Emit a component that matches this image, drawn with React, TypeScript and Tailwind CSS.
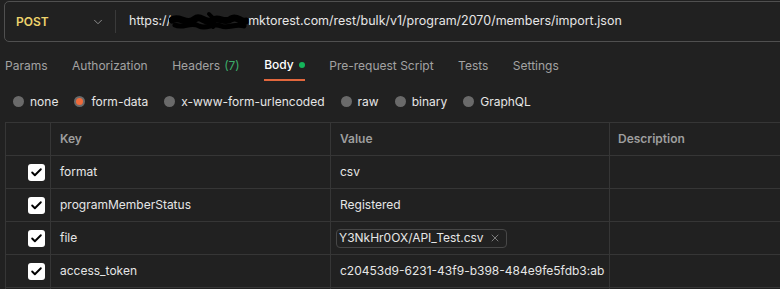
import { ChevronDown, X, Check } from "lucide-react";

type Row = {
  key: string;
  value: string;
  file?: boolean;
};

const rows: Row[] = [
  { key: "format", value: "csv" },
  { key: "programMemberStatus", value: "Registered" },
  { key: "file", value: "Y3NkHr0OX/API_Test.csv", file: true },
  { key: "access_token", value: "c20453d9-6231-43f9-b398-484e9fe5fdb3:ab" },
  { key: "", value: "" },
];

const tabs = ["Params", "Authorization", "Headers", "Body", "Pre-request Script", "Tests", "Settings"];

const bodyTypes = ["none", "form-data", "x-www-form-urlencoded", "raw", "binary", "GraphQL"];

const Scribble = () => (
  <svg width="80" height="22" viewBox="0 0 80 22" className="shrink-0 -ml-[2px] -mr-[1px]">
    <path
      d="M3 9 C10 4 18 15 26 8 C32 3 36 14 44 9 C50 5 55 13 62 8 C68 4 72 12 77 10"
      stroke="#000"
      strokeWidth="7"
      fill="none"
      strokeLinecap="round"
    />
    <path
      d="M6 14 C14 18 22 10 30 15 C38 19 44 11 52 15 C60 18 66 12 75 15"
      stroke="#000"
      strokeWidth="5"
      fill="none"
      strokeLinecap="round"
    />
    <path d="M40 3 C44 6 46 10 44 16" stroke="#000" strokeWidth="4" fill="none" strokeLinecap="round" />
  </svg>
);

const App = () => {
  return (
    <div className="w-[780px] h-[289px] overflow-hidden bg-[#212121] font-['Inter',sans-serif] text-[12px] text-[#e6e6e6]">
      {/* url bar */}
      <div className="pl-1 pt-px">
        <div className="h-[41px] w-[820px] border border-[#505050] rounded-[5px] flex items-center">
          <div className="w-[110px] pl-[11px] pr-[10px] flex items-center justify-between">
            <span className="font-semibold text-[#eed36c]">POST</span>
            <ChevronDown size={14} strokeWidth={1.5} className="text-[#9a9a9a]" />
          </div>
          <div className="w-px h-[23px] bg-[#3a3a3a]" />
          <div className="pl-[13px] flex items-center whitespace-nowrap text-[12.5px]">
            <span>https://</span>
            <Scribble />
            <span>mktorest.com/rest/bulk/v1/program/2070/members/import.json</span>
          </div>
        </div>
      </div>

      {/* tabs */}
      <div className="flex gap-[24.5px] pl-[5px] pt-[15px] h-[39px]">
        {tabs.map((t) => (
          <div
            key={t}
            className={
              t === "Body"
                ? "pb-[5px] border-b-2 border-[#e2673d] text-white font-medium flex items-start h-[24px]"
                : "pb-[5px] text-[#a3a3a3] h-[24px]"
            }
          >
            <span className="leading-4">{t}</span>
            {t === "Headers" && <span className="leading-4 text-[#3cae6a] ml-1">(7)</span>}
            {t === "Body" && <span className="w-[6px] h-[6px] rounded-full bg-[#14b55a] ml-[5px] mt-[5px]" />}
          </div>
        ))}
      </div>

      {/* body types */}
      <div className="flex items-center h-[41px] pl-[13px]">
        {bodyTypes.map((b) => (
          <div key={b} className="flex items-center mr-4">
            <span className="w-[11px] h-[11px] rounded-full bg-[#6a6a6a] flex items-center justify-center">
              {b === "form-data" && <span className="w-[7px] h-[7px] rounded-full bg-[#f06a3a]" />}
            </span>
            <span className="ml-[6px]">{b}</span>
          </div>
        ))}
      </div>

      {/* table */}
      <div className="ml-[5px] w-[800px] border-t border-l border-[#363636]">
        <div className="flex h-[33px] border-b border-[#363636] text-[#9e9e9e] font-semibold">
          <div className="w-[45px] border-r border-[#363636]" />
          <div className="w-[280px] border-r border-[#363636] pl-[9px] flex items-center">Key</div>
          <div className="w-[279px] border-r border-[#363636] pl-[9px] flex items-center">Value</div>
          <div className="flex-1 pl-[8px] flex items-center">Description</div>
        </div>
        {rows.map((r, i) => (
          <div key={i} className="flex h-[33px] border-b border-[#363636]">
            <div className="w-[45px] border-r border-[#363636] flex items-center justify-end pr-[5px]">
              {r.key && (
                <span className="w-[17px] h-[17px] rounded-[3px] bg-white flex items-center justify-center">
                  <Check size={13} strokeWidth={3.5} className="text-black" />
                </span>
              )}
            </div>
            <div className="w-[280px] border-r border-[#363636] pl-[9px] flex items-center">{r.key}</div>
            <div className="w-[279px] border-r border-[#363636] pl-[9px] flex items-center whitespace-nowrap overflow-hidden">
              {r.file ? (
                <span className="-ml-[4px] h-[19px] w-[171px] border border-[#474747] rounded-[4px] pl-[2px] pr-[5px] flex items-center justify-between">
                  <span>{r.value}</span>
                  <X size={12} strokeWidth={1.5} className="text-[#9a9a9a]" />
                </span>
              ) : (
                r.value
              )}
            </div>
            <div className="flex-1" />
          </div>
        ))}
      </div>
    </div>
  );
};

export default App;
